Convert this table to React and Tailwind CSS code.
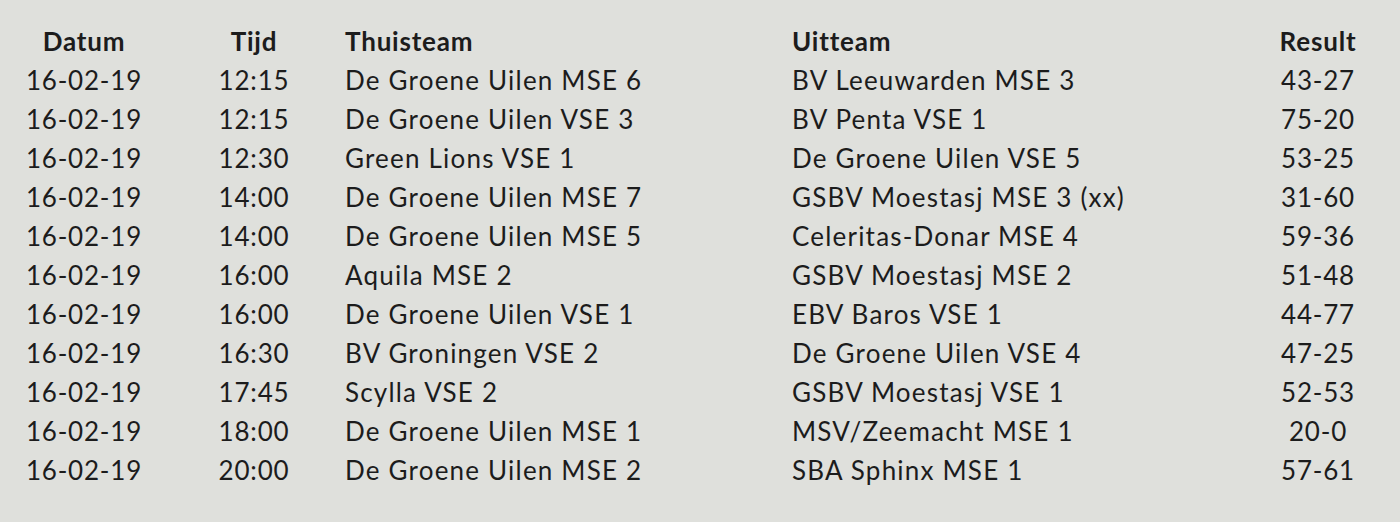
const rows = [
  ['16-02-19', '12:15', 'De Groene Uilen MSE 6', 'BV Leeuwarden MSE 3', '43-27'],
  ['16-02-19', '12:15', 'De Groene Uilen VSE 3', 'BV Penta VSE 1', '75-20'],
  ['16-02-19', '12:30', 'Green Lions VSE 1', 'De Groene Uilen VSE 5', '53-25'],
  ['16-02-19', '14:00', 'De Groene Uilen MSE 7', 'GSBV Moestasj MSE 3 (xx)', '31-60'],
  ['16-02-19', '14:00', 'De Groene Uilen MSE 5', 'Celeritas-Donar MSE 4', '59-36'],
  ['16-02-19', '16:00', 'Aquila MSE 2', 'GSBV Moestasj MSE 2', '51-48'],
  ['16-02-19', '16:00', 'De Groene Uilen VSE 1', 'EBV Baros VSE 1', '44-77'],
  ['16-02-19', '16:30', 'BV Groningen VSE 2', 'De Groene Uilen VSE 4', '47-25'],
  ['16-02-19', '17:45', 'Scylla VSE 2', 'GSBV Moestasj VSE 1', '52-53'],
  ['16-02-19', '18:00', 'De Groene Uilen MSE 1', 'MSV/Zeemacht MSE 1', '20-0'],
  ['16-02-19', '20:00', 'De Groene Uilen MSE 2', 'SBA Sphinx MSE 1', '57-61'],
];

const Row = ({ cells, bold }) => (
  <div className={`grid grid-cols-[168px_172px_447px_466px_130px] h-[39px] items-center ${bold ? 'font-bold tracking-[0.8px]' : 'tracking-[1.2px]'}`}>
    <div className={`text-center ${bold ? '' : 'tracking-[0.8px]'}`}>{cells[0]}</div>
    <div className={`text-center ${bold ? '' : 'tracking-[0.8px]'}`}>{cells[1]}</div>
    <div className="pl-[5px]">{cells[2]}</div>
    <div className="pl-[5px]">{cells[3]}</div>
    <div className={`text-center ${bold ? '' : 'tracking-[0.8px]'}`}>{cells[4]}</div>
  </div>
);

export default function App() {
  return (
    <div className="w-[1400px] h-[522px] bg-[#dfe0dc] text-[#1c1c1c] pt-[22px] text-[26px] leading-[39px] font-['Lato',sans-serif]">
      <Row cells={['Datum', 'Tijd', 'Thuisteam', 'Uitteam', 'Result']} bold />
      {rows.map((r, i) => (
        <Row key={i} cells={r} />
      ))}
    </div>
  );
}
